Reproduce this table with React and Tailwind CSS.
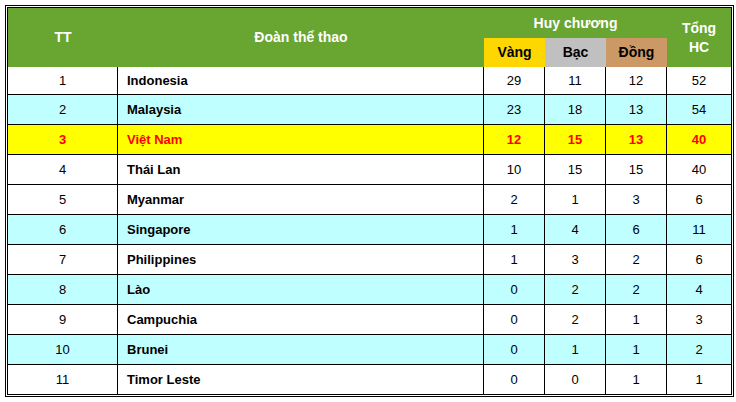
const rows = [
  { tt: 1, name: 'Indonesia', v: 29, b: 11, d: 12, t: 52 },
  { tt: 2, name: 'Malaysia', v: 23, b: 18, d: 13, t: 54, cyan: true },
  { tt: 3, name: 'Việt Nam', v: 12, b: 15, d: 13, t: 40, hl: true },
  { tt: 4, name: 'Thái Lan', v: 10, b: 15, d: 15, t: 40 },
  { tt: 5, name: 'Myanmar', v: 2, b: 1, d: 3, t: 6 },
  { tt: 6, name: 'Singapore', v: 1, b: 4, d: 6, t: 11, cyan: true },
  { tt: 7, name: 'Philippines', v: 1, b: 3, d: 2, t: 6 },
  { tt: 8, name: 'Lào', v: 0, b: 2, d: 2, t: 4, cyan: true },
  { tt: 9, name: 'Campuchia', v: 0, b: 2, d: 1, t: 3 },
  { tt: 10, name: 'Brunei', v: 0, b: 1, d: 1, t: 2, cyan: true },
  { tt: 11, name: 'Timor Leste', v: 0, b: 0, d: 1, t: 1 },
];

const cols = 'grid grid-cols-[110px_366px_61px_61px_61px_64px]';

const App = () => {
  return (
    <div className="bg-white w-[736px] h-[402px] pt-[5px] pl-[5px] font-['Liberation_Sans',Arial,sans-serif] text-[13px] text-black">
      <div className="w-[729px] border-[3px] border-double border-black">
        {/* header */}
        <div className={`${cols} grid-rows-[30px_29px] bg-[#68a531] text-white font-bold text-[14px]`}>
          <div className="row-span-2 flex items-center justify-center">TT</div>
          <div className="row-span-2 flex items-center justify-center">Đoàn thể thao</div>
          <div className="col-span-3 flex items-center justify-center">Huy chương</div>
          <div className="row-span-2 flex flex-col items-center justify-center leading-[19px]">
            <span>Tổng</span>
            <span>HC</span>
          </div>
          <div className="bg-[#ffd700] text-black flex items-center justify-center">Vàng</div>
          <div className="bg-[#c0c0c0] text-black flex items-center justify-center">Bạc</div>
          <div className="bg-[#cc9966] text-black flex items-center justify-center">Đồng</div>
        </div>

        {/* body */}
        {rows.map((r, i) => {
          const bg = r.hl ? 'bg-[#ffff00]' : r.cyan ? 'bg-[#c0ffff]' : 'bg-white';
          const last = i === rows.length - 1;
          const h = i === 0 ? 'h-[28px]' : last ? 'h-[29px]' : 'h-[30px]';
          const txt = r.hl ? 'text-[#ff0000] font-bold' : '';
          return (
            <div key={r.tt} className={`${cols} ${h} ${bg} ${txt} ${last ? '' : 'border-b border-black'}`}>
              <div className="border-r border-black flex items-center justify-center">{r.tt}</div>
              <div className="border-r border-black flex items-center pl-[9px] font-bold">{r.name}</div>
              <div className="border-r border-black flex items-center justify-center">{r.v}</div>
              <div className="border-r border-black flex items-center justify-center">{r.b}</div>
              <div className="border-r border-black flex items-center justify-center">{r.d}</div>
              <div className="flex items-center justify-center">{r.t}</div>
            </div>
          );
        })}
      </div>
    </div>
  );
};

export default App;
